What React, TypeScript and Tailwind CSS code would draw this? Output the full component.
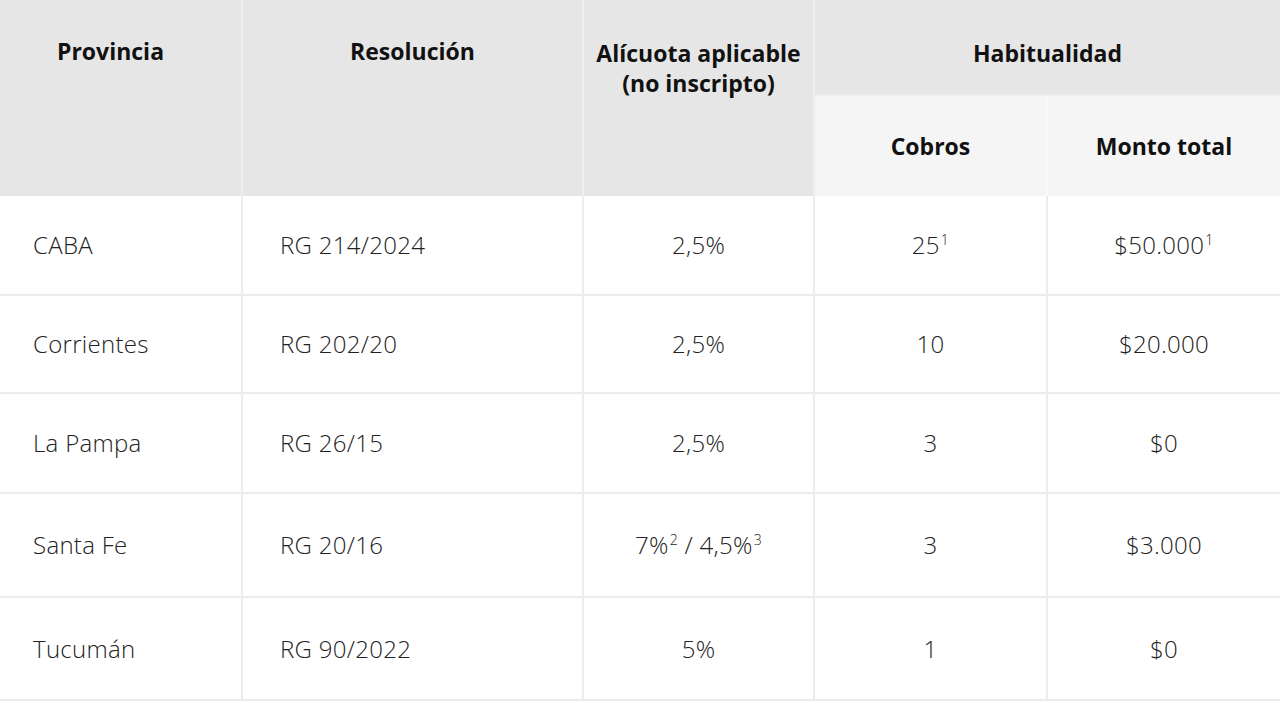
import React from "react";

const Sup = ({ children }: { children: React.ReactNode }) => (
  <span className="relative -top-[9px] text-[14px] ml-[1px]">{children}</span>
);

const rows: { p: string; r: string; a: React.ReactNode; c: React.ReactNode; m: React.ReactNode; h: string }[] = [
  { p: "CABA", r: "RG 214/2024", a: "2,5%", c: <>25<Sup>1</Sup></>, m: <>$50.000<Sup>1</Sup></>, h: "h-[99px]" },
  { p: "Corrientes", r: "RG 202/20", a: "2,5%", c: "10", m: "$20.000", h: "h-[98px]" },
  { p: "La Pampa", r: "RG 26/15", a: "2,5%", c: "3", m: "$0", h: "h-[100px]" },
  { p: "Santa Fe", r: "RG 20/16", a: <>7%<Sup>2</Sup> / 4,5%<Sup>3</Sup></>, c: "3", m: "$3.000", h: "h-[104px]" },
  { p: "Tucumán", r: "RG 90/2022", a: "5%", c: "1", m: "$0", h: "h-[103px]" },
];

export default function App() {
  return (
    <div className="w-[1280px] h-[701px] bg-white overflow-hidden" style={{ fontFamily: "'Open Sans', Lato, sans-serif" }}>
      <table className="w-[1280px] border-collapse table-fixed">
        <colgroup>
          <col className="w-[242px]" />
          <col className="w-[341px]" />
          <col className="w-[231px]" />
          <col className="w-[233px]" />
          <col className="w-[233px]" />
        </colgroup>
        <thead>
          <tr className="h-[95px]">
            <th rowSpan={2} className="bg-[#e6e6e6] border-r-2 border-[#efefef] align-top pt-[36px] pr-[20px] text-[23px] font-bold text-[#111] leading-[30px]">Provincia</th>
            <th rowSpan={2} className="bg-[#e6e6e6] border-r-2 border-[#efefef] align-top pt-[36px] text-[23px] font-bold text-[#111] leading-[30px]">Resolución</th>
            <th rowSpan={2} className="bg-[#e6e6e6] border-r-2 border-[#efefef] align-top pt-[38px] text-[23px] font-bold text-[#111] leading-[30px]">Alícuota aplicable<br />(no inscripto)</th>
            <th colSpan={2} className="bg-[#e6e6e6] border-b-2 border-[#eeeeee] align-top pt-[38px] text-[23px] font-bold text-[#111] leading-[30px]">Habitualidad</th>
          </tr>
          <tr className="h-[101px]">
            <th className="bg-[#f5f5f5] border-r-2 border-[#f9f9f9] text-[23px] font-bold text-[#111] pt-[1px]">Cobros</th>
            <th className="bg-[#f5f5f5] text-[23px] font-bold text-[#111] pt-[1px]">Monto total</th>
          </tr>
        </thead>
        <tbody className="text-[24px] text-[#222] font-light tracking-[0.3px]">
          {rows.map((row) => (
            <tr key={row.p} className={`${row.h} border-b-2 border-[#ececec]`}>
              <td className="pl-[33px] border-r-2 border-[#ececec]">{row.p}</td>
              <td className="pl-[37px] border-r-2 border-[#ececec]">{row.r}</td>
              <td className="text-center border-r-2 border-[#ececec]">{row.a}</td>
              <td className="text-center border-r-2 border-[#ececec]">{row.c}</td>
              <td className="text-center">{row.m}</td>
            </tr>
          ))}
        </tbody>
      </table>
    </div>
  );
}
